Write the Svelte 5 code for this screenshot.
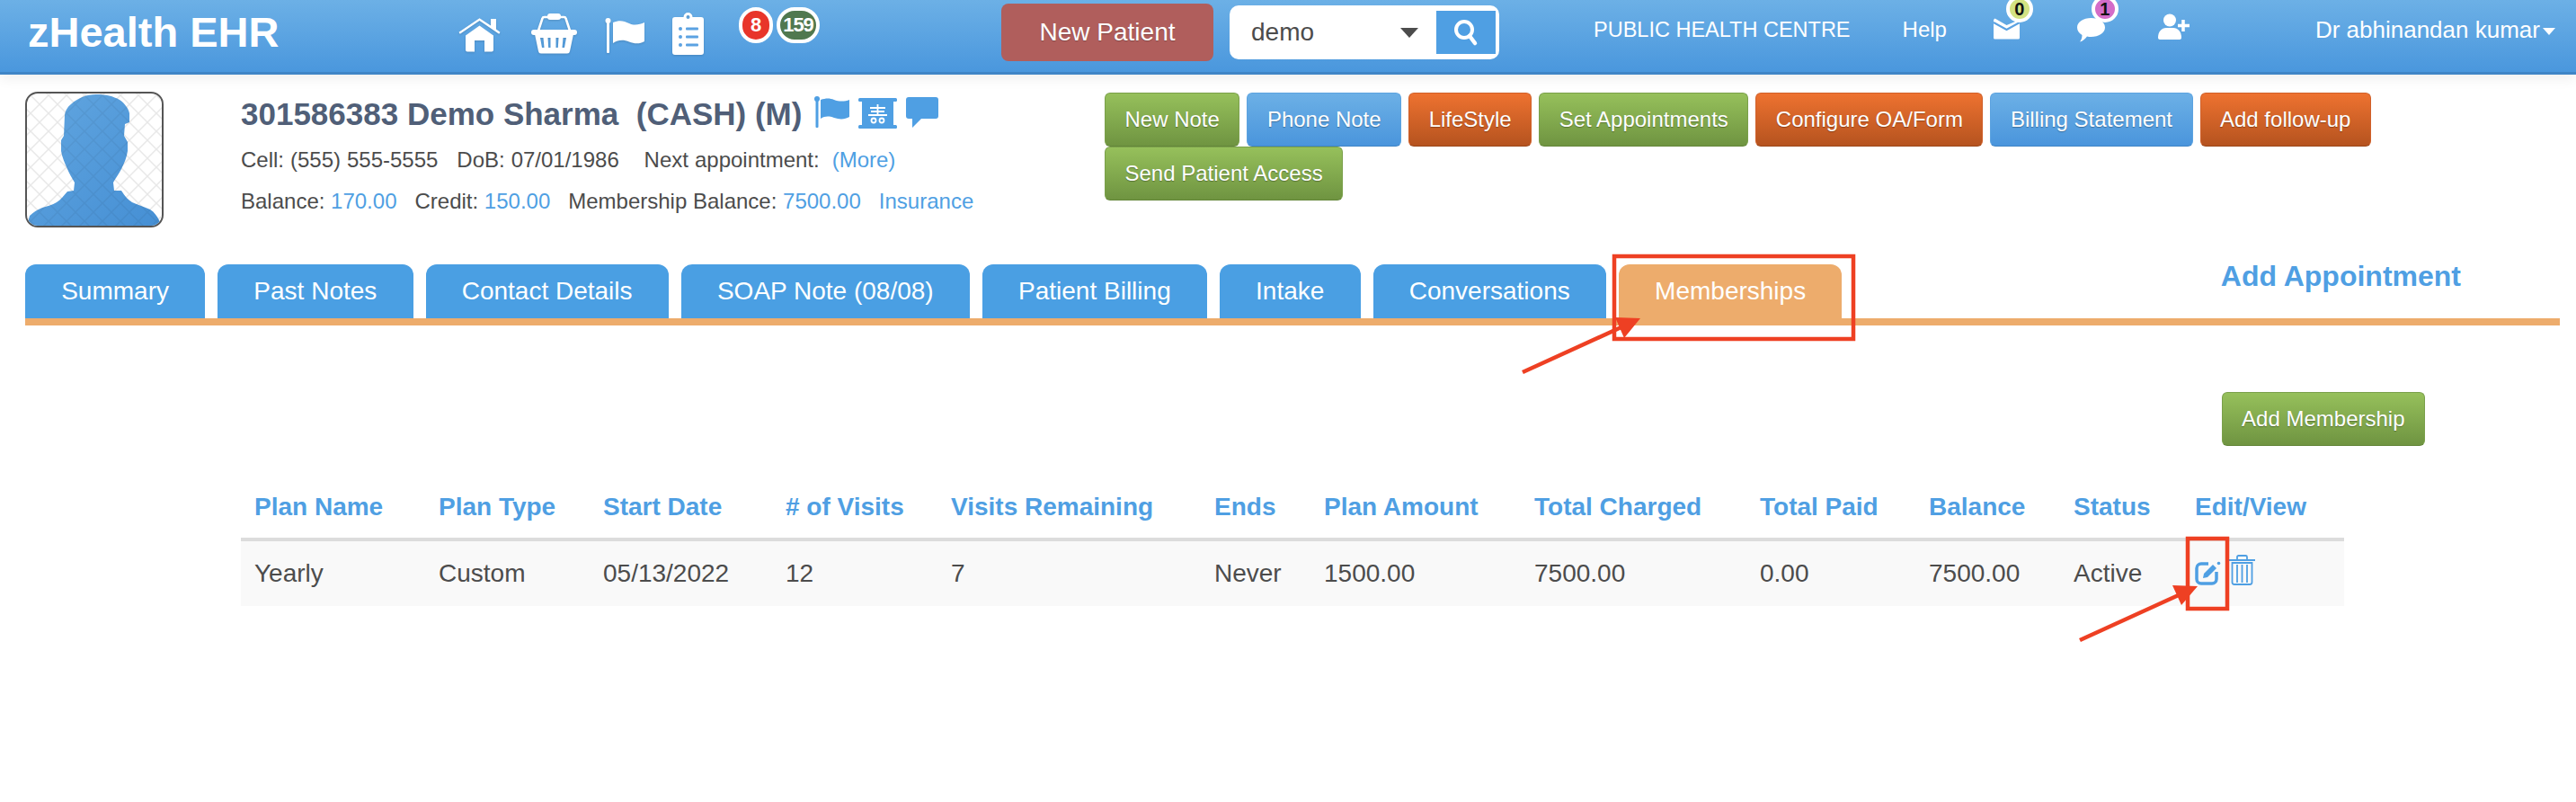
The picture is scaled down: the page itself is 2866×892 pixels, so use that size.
<script>
  const tabs = ["Summary", "Past Notes", "Contact Details", "SOAP Note (08/08)", "Patient Billing", "Intake", "Conversations", "Memberships"];
  const actions = [
    ["New Note", "green"],
    ["Phone Note", "blue"],
    ["LifeStyle", "orange"],
    ["Set Appointments", "green"],
    ["Configure OA/Form", "orange"],
    ["Billing Statement", "blue"],
    ["Add follow-up", "orange"],
    ["Send Patient Access", "green"],
  ];
  const cols = [
    ["Plan Name", 205], ["Plan Type", 183], ["Start Date", 203], ["# of Visits", 184],
    ["Visits Remaining", 293], ["Ends", 122], ["Plan Amount", 234], ["Total Charged", 251],
    ["Total Paid", 188], ["Balance", 161], ["Status", 135], ["Edit/View", 181],
  ];
  const row = ["Yearly", "Custom", "05/13/2022", "12", "7", "Never", "1500.00", "7500.00", "0.00", "7500.00", "Active"];
  const silhouette = "M79 3C90 3 98 5 105 9C111 13 115 19 116 24L116 34L111 36L110 49L114 56L114 66C113 73 110 80 107 86C104 92 100 97 98 101L99 110L107 110C111 116 114 120 119 123C125 126 133 128 139 131C144 134 147 139 149 143L152 149L2 149L5 138C9 134 14 131 19 129C25 127 30 126 35 123C40 120 43 115 47 111L54 110L55 101C52 96 49 91 47 86C44 79 41 73 40 66L40 54L43 49L44 26C45 20 48 16 52 13C59 7 68 3 79 3Z";
</script>

<div class="page">
  <header class="topbar">
    <div class="brand">zHealth EHR</div>
    <nav class="quick">
      <svg class="home" width="47" height="38" viewBox="0 0 47 38"><path fill="#fff" d="M36 1h6v11.500l4.500 3.300-1.300 1.900L23.500 3 1.800 17.700.5 15.800 23.500 .2 36 8.500zM8 19.500 23.500 8.500 39 19.500V35.500a2 2 0 0 1-2 2h-8V25h-11v12.500H10a2 2 0 0 1-2-2z"/></svg>
      <svg class="basket" width="51" height="46" viewBox="0 0 51 46">
        <path fill="none" stroke="#fff" stroke-width="2.600" d="M8 20 12.500 6.500A2 2 0 0 1 14.500 5h22a2 2 0 0 1 2 1.500L43 20"/>
        <rect x="18" y="1" width="15" height="7" rx="3" fill="#fff"/>
        <rect x="0" y="19" width="51" height="6" rx="3" fill="#fff"/>
        <path fill="#fff" fill-rule="evenodd" d="M4 24h43l-4 19a3 3 0 0 1-3 2.500H11A3 3 0 0 1 8 43zM10 28l2 11h2.500L13.500 28zM18.500 28l.7 11h2.300V28zM27.500 28v11h2.300l.7-11zM35.500 28l-1 11H37l2-11z"/>
      </svg>
      <svg class="flag" width="45" height="41" viewBox="0 0 45 41"><circle cx="3.500" cy="4" r="3" fill="#fff"/><rect x="2" y="4" width="3" height="36" rx="1" fill="#fff"/><path fill="#fff" d="M9 6c7-3 12-2 18 1s12 1 17-1v21c-5 3-11 3-17 .5S15 25 9 29z"/></svg>
      <svg class="clip" width="35" height="47" viewBox="0 0 35 47"><path fill="#fff" fill-rule="evenodd" d="M17.500 0a5 5 0 0 1 5 5h9.500a3 3 0 0 1 3 3v36a3 3 0 0 1-3 3H3a3 3 0 0 1-3-3V8a3 3 0 0 1 3-3h9.500a5 5 0 0 1 5-5zm0 3a2 2 0 1 0 0 4 2 2 0 0 0 0-4z"/><g fill="#5ba2e2"><circle cx="9" cy="18" r="2"/><circle cx="9" cy="27" r="2"/><circle cx="9" cy="36" r="2"/><rect x="15" y="16.500" width="14" height="3" rx="1"/><rect x="15" y="25.500" width="14" height="3" rx="1"/><rect x="15" y="34.500" width="14" height="3" rx="1"/></g></svg>
    </nav>
    <div class="counts">
      <span class="count red">8</span>
      <span class="count dark">159</span>
    </div>
    <button class="new-patient">New Patient</button>
    <div class="search">
      <span class="term">demo</span>
      <span class="caret"></span>
      <span class="go">
        <svg width="30" height="32" viewBox="0 0 30 32"><circle cx="13" cy="13" r="9" fill="none" stroke="#fff" stroke-width="4"/><path d="M19 20l6 8" stroke="#fff" stroke-width="4.500" stroke-linecap="round"/></svg>
      </span>
    </div>
    <span class="link centre">PUBLIC HEALTH CENTRE</span>
    <span class="link help">Help</span>
    <div class="notify mail">
      <svg width="29" height="24" viewBox="0 0 29 24"><path fill="#fff" d="M0 2 1.500 .5 14.500 8 29 2v20a1.500 1.500 0 0 1-1.500 1.500h-26A1.500 1.500 0 0 1 0 22z"/><path fill="none" stroke="#5ba2e2" stroke-width="2" d="M0 5l14.500 8L29 5"/></svg>
      <span class="pip lime">0</span>
    </div>
    <div class="notify chat">
      <svg width="31" height="27" viewBox="0 0 31 27"><path fill="#fff" d="M15.500 0C24 0 31 4.500 31 10.500S24 21 15.500 21c-1.500 0-3 0-4.500-.5C9 23 6 26 3 26.500c1.500-2 2.500-4.500 2.500-7.500C2 17 0 14 0 10.500 0 4.500 7 0 15.500 0z"/></svg>
      <span class="pip pink">1</span>
    </div>
    <svg class="add-user" width="36" height="29" viewBox="0 0 36 29"><circle cx="13" cy="7.500" r="7" fill="#fff"/><path fill="#fff" d="M0 27c0-7 4-11 9-11h8c5 0 9 4 9 11 0 1-1 2-2 2H2c-1 0-2-1-2-2z"/><path stroke="#fff" stroke-width="3.500" d="M28 7v13M22 13.500h13"/></svg>
    <span class="link user">Dr abhinandan kumar<span class="user-caret"></span></span>
  </header>

  <section class="patient">
    <div class="avatar">
      <svg width="150" height="147" viewBox="2 2 150 147">
        <defs>
          <pattern id="mesh" width="20" height="20" patternUnits="userSpaceOnUse" patternTransform="translate(6 4)">
            <path d="M0 0l20 20M20 0L0 20" stroke="#e8e8e8" stroke-width="1.500" fill="none"/>
          </pattern>
          <pattern id="mesh-dark" width="20" height="20" patternUnits="userSpaceOnUse" patternTransform="translate(6 4)">
            <path d="M0 0l20 20M20 0L0 20" stroke="#000" stroke-opacity="0.05" stroke-width="1.500" fill="none"/>
          </pattern>
          <linearGradient id="sil" x1="0" y1="0" x2="1" y2="1">
            <stop offset="0" stop-color="#62a6e0"/>
            <stop offset="1" stop-color="#458fd4"/>
          </linearGradient>
        </defs>
        <rect x="2" y="2" width="150" height="147" fill="url(#mesh)"/>
        <path fill="url(#sil)" d={silhouette}/>
        <path fill="url(#mesh-dark)" d={silhouette}/>
      </svg>
    </div>
    <div class="info">
      <div class="name-row">
        <h1>301586383 Demo Sharma &nbsp;(CASH) (M)</h1>
        <svg class="mini-flag" width="39" height="35" viewBox="0 0 39 35"><circle cx="3" cy="3" r="3" fill="#4f9fe3"/><rect x="1.500" y="3" width="3" height="32" rx="1" fill="#4f9fe3"/><path fill="#4f9fe3" d="M7 4c6-2 10-2 15 0s12 2 17 0v19c-5 3-11 3-17 1S12 22 7 25z"/></svg>
        <svg class="mini-scroll" width="43" height="34" viewBox="0 0 43 34"><g fill="#4f9fe3"><rect width="43" height="4" rx="1.500"/><rect x="0" y="30" width="43" height="4" rx="1.500"/><rect x="4" y="4" width="35" height="26"/></g><g stroke="#fff" stroke-width="1.800" fill="none"><path d="M21.500 7v13M13 11h17M14 15h15M11 19h21"/><circle cx="17" cy="25" r="2.500"/><circle cx="26" cy="25" r="2.500"/></g></svg>
        <svg class="mini-chat" width="36" height="34" viewBox="0 0 36 34"><path fill="#4f9fe3" d="M3 0h30a3 3 0 0 1 3 3v18a3 3 0 0 1-3 3H17L7 34V24H3a3 3 0 0 1-3-3V3a3 3 0 0 1 3-3z"/></svg>
      </div>
      <p class="first">Cell: (555) 555-5555 &nbsp; DoB: 07/01/1986 &nbsp;&nbsp; Next appointment: &nbsp;<a href="#more">(More)</a></p>
      <p>Balance: <a href="#b">170.00</a> &nbsp; Credit: <a href="#c">150.00</a> &nbsp; Membership Balance: <a href="#m">7500.00</a> &nbsp; <a href="#i">Insurance</a></p>
    </div>
    <div class="actions">
      {#each actions as [label, tone]}
        <button class="btn {tone}">{label}</button>
      {/each}
    </div>
  </section>

  <div class="tabs">
    {#each tabs as t, i}
      <div class="tab" class:active={i === tabs.length - 1}>{t}</div>
    {/each}
    <a class="add-appt" href="#appt">Add Appointment</a>
  </div>

  <div class="toolbar">
    <button class="btn green">Add Membership</button>
  </div>

  <table>
    <thead>
      <tr>
        {#each cols as [label, w]}
          <th style="width: {w}px">{label}</th>
        {/each}
      </tr>
    </thead>
    <tbody>
      <tr>
        {#each row as cell}
          <td>{cell}</td>
        {/each}
        <td>
          <div class="tools">
            <svg width="29" height="27" viewBox="0 0 29 27"><path fill="none" stroke="#4f9fe3" stroke-width="3.500" d="M15 3H7a5 5 0 0 0-5 5v12a5 5 0 0 0 5 5h12a5 5 0 0 0 5-5v-8"/><path fill="#4f9fe3" d="M9 19l1-5L20 4l4 4-10 10z"/><circle cx="26.500" cy="2.500" r="1.800" fill="#4f9fe3"/></svg>
            <svg width="29" height="34" viewBox="0 0 29 34"><g fill="none" stroke="#4f9fe3" stroke-width="1.800"><path d="M0 6h29M9 5V2.500A1.500 1.500 0 0 1 10.500 1h8A1.500 1.500 0 0 1 20 2.500V5"/><path d="M3.500 9v21.500a2.500 2.500 0 0 0 2.500 2.500h17a2.500 2.500 0 0 0 2.500-2.500V9zM9 11v20M14.500 11v20M20 11v20"/></g></svg>
          </div>
        </td>
      </tr>
    </tbody>
  </table>

  <!-- annotation layer drawn on the screenshot -->
  <svg class="marks" width="2866" height="892" viewBox="0 0 2866 892">
    <g fill="none" stroke="#ee4023" stroke-width="4.500">
      <rect x="1796" y="285" width="266" height="92"/>
      <rect x="2434" y="599" width="44" height="78"/>
      <path d="M1694 414 1808 362"/>
      <path d="M2314 712 2428 660"/>
    </g>
    <g fill="#ee4023">
      <polygon points="1825,354 1797,353 1807,376"/>
      <polygon points="2445,652 2417,651 2427,673"/>
    </g>
  </svg>
</div>

<style>
  :global(body) {
    margin: 0;
    background: #fff;
  }
  .page {
    position: relative;
    width: 2866px;
    height: 892px;
    overflow: hidden;
    font-family: "Liberation Sans", Arial, sans-serif;
    font-size: 24px;
    color: #4c4c4c;
  }
  .topbar {
    display: flex;
    align-items: flex-start;
    height: 80px;
    border-bottom: 3px solid #3f85c6;
    background: linear-gradient(#6cb0e6, #4a97dd);
    box-shadow: 0 4px 14px rgba(0, 0, 0, 0.07);
    color: #fff;
  }
  .brand {
    flex: none;
    width: 479px;
    padding-left: 31px;
    font-size: 47px;
    font-weight: 700;
    line-height: 72px;
  }
  .quick {
    display: flex;
    align-items: flex-start;
    width: 312px;
    flex: none;
  }
  .quick svg {
    filter: drop-shadow(0 1px 1px rgba(0, 0, 0, 0.15));
  }
  .home { margin-top: 20px; }
  .basket { margin: 14px 0 0 34px; }
  .flag { margin: 19px 0 0 31px; }
  .clip { margin: 14px 0 0 30px; }
  .counts {
    display: flex;
    margin-top: 8px;
    width: 292px;
    flex: none;
  }
  .count {
    box-sizing: border-box;
    height: 40px;
    border: 4px solid #fff;
    border-radius: 20px;
    font-size: 22px;
    font-weight: 700;
    line-height: 32px;
    text-align: center;
  }
  .count.red {
    width: 38px;
    background: #e8352a;
    margin-right: 4px;
  }
  .count.dark {
    width: 48px;
    background: #50784f;
    letter-spacing: -1px;
  }
  .new-patient {
    width: 236px;
    height: 64px;
    margin-top: 4px;
    flex: none;
    border: 0;
    border-radius: 8px;
    background: #b05e5c;
    color: #fff;
    font: 28px "Liberation Sans", Arial, sans-serif;
    text-shadow: 0 1px 1px rgba(0, 0, 0, 0.25);
  }
  .search {
    display: flex;
    align-items: center;
    width: 300px;
    height: 60px;
    margin: 6px 0 0 18px;
    flex: none;
    box-sizing: border-box;
    padding: 0 4px 0 24px;
    background: #fff;
    border-radius: 10px;
    color: #4c4c4c;
    font-size: 28px;
  }
  .term { flex: 1; }
  .caret {
    width: 0;
    height: 0;
    border-left: 10px solid transparent;
    border-right: 10px solid transparent;
    border-top: 11px solid #4c4c4c;
    margin-right: 20px;
  }
  .go {
    display: flex;
    align-items: center;
    justify-content: center;
    width: 66px;
    height: 48px;
    background: #4f9fe3;
  }
  .link {
    flex: none;
    line-height: 34px;
    margin-top: 16px;
    white-space: nowrap;
  }
  .centre { margin-left: 105px; font-size: 23.5px; }
  .help { margin-left: 58px; }
  .notify {
    position: relative;
    flex: none;
  }
  .notify svg { display: block; }
  .mail { margin: 20px 0 0 52px; }
  .chat { margin: 20px 0 0 64px; }
  .pip {
    position: absolute;
    top: -25px;
    box-sizing: border-box;
    width: 30px;
    height: 30px;
    border: 4px solid #fff;
    border-radius: 50%;
    color: #111;
    font-size: 20px;
    font-weight: 700;
    line-height: 22px;
    text-align: center;
  }
  .mail .pip { left: 14px; }
  .chat .pip { left: 16px; }
  .lime { background: #d3e282; }
  .pink { background: #d36cc8; }
  .add-user {
    margin: 15px 0 0 59px;
    flex: none;
  }
  .user { margin-left: 139px; font-size: 26px; }
  .user-caret {
    display: inline-block;
    margin-left: 3px;
    vertical-align: 3px;
    border-left: 7px solid transparent;
    border-right: 7px solid transparent;
    border-top: 8px solid #fff;
  }

  .patient {
    display: flex;
    align-items: flex-start;
    height: 211px;
    padding: 19px 0 0 28px;
    box-sizing: border-box;
  }
  .avatar {
    flex: none;
    width: 154px;
    height: 151px;
    box-sizing: border-box;
    border: 2px solid #555;
    border-radius: 14px;
    overflow: hidden;
  }
  .avatar svg { display: block; }
  .info {
    flex: none;
    width: 961px;
    margin-left: 86px;
  }
  .name-row {
    display: flex;
    align-items: flex-start;
    height: 50px;
  }
  h1 {
    margin: 0;
    font-size: 35px;
    font-weight: 700;
    line-height: 50px;
    color: #505f78;
    white-space: nowrap;
  }
  .mini-flag { margin: 5px 0 0 14px; }
  .mini-scroll { margin: 7px 0 0 10px; }
  .mini-chat { margin: 6px 0 0 10px; }
  p {
    margin: 6px 0 0;
    line-height: 40px;
    white-space: nowrap;
  }
  p.first { word-spacing: 0.3px; }
  p + p { margin-top: 6px; }
  a {
    color: #4f9fe3;
    text-decoration: none;
  }
  .actions {
    display: flex;
    flex-wrap: wrap;
    column-gap: 8px;
    width: 1440px;
    margin-top: 1px;
  }
  .btn {
    height: 60px;
    padding: 0 21.5px;
    border-radius: 6px;
    color: #fff;
    font: 24px "Liberation Sans", Arial, sans-serif;
    text-shadow: 0 1px 1px rgba(0, 0, 0, 0.3);
    border: 1px solid;
  }
  .green {
    background: linear-gradient(#96c05b, #6f9441);
    border-color: #7aa04a #7aa04a #64863a;
  }
  .blue {
    background: linear-gradient(#6cb0e6, #4a95dc);
    border-color: #5ca3e0 #5ca3e0 #3f85c6;
  }
  .orange {
    background: linear-gradient(#ee7230, #b5531f);
    border-color: #d0602a #d0602a #9c4719;
  }

  .tabs {
    display: flex;
    gap: 14px;
    margin: 0 18px 0 28px;
    border-bottom: 8px solid #edac6c;
  }
  .tab {
    padding: 0 40.2px;
    height: 60px;
    line-height: 60px;
    font-size: 28px;
    color: #fff;
    background: #4a9fe3;
    border-radius: 12px 12px 0 0;
    white-space: nowrap;
  }
  .tab.active { background: #edac6c; }
  .add-appt {
    margin-left: auto;
    margin-right: 110px;
    font-size: 32px;
    font-weight: 700;
    line-height: 26px;
  }
  .toolbar {
    display: flex;
    justify-content: flex-end;
    margin: 74px 168px 0 0;
  }
  table {
    width: 2340px;
    margin: 34px 0 0 268px;
    border-collapse: collapse;
    table-layout: fixed;
    font-size: 28px;
  }
  th {
    box-sizing: border-box;
    height: 70px;
    padding: 0 0 0 15px;
    text-align: left;
    color: #4f9fe3;
    font-weight: 700;
    border-bottom: 4px solid #dcdcdc;
    white-space: nowrap;
  }
  td {
    height: 72px;
    padding: 0 0 0 15px;
    background: #f9f9f9;
    white-space: nowrap;
  }
  .tools {
    display: flex;
    align-items: flex-end;
    gap: 9px;
    padding-bottom: 8px;
  }
  .marks {
    position: absolute;
    top: 0;
    left: 0;
    pointer-events: none;
  }
</style>
